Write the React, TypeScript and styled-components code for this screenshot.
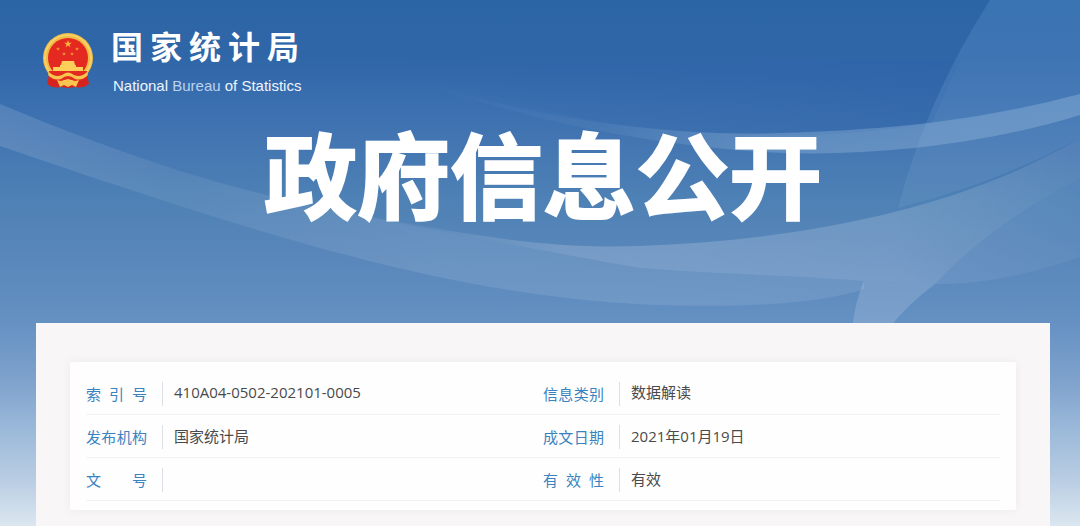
import React from "react";
import styled, { createGlobalStyle } from "styled-components";

const GlobalStyle = createGlobalStyle`
  *, *::before, *::after { box-sizing: border-box; }
  body {
    margin: 0;
    font-family: "Open Sans", "Noto Sans CJK SC", sans-serif;
  }
`;

const Page = styled.div`
  position: relative;
  display: flex;
  flex-direction: column;
  min-height: 100vh;
  background: linear-gradient(
    #2c65a5 0,
    #2f66a8 55px,
    #396eaf 100px,
    #4577b2 150px,
    #4e81b5 200px,
    #5886ba 250px,
    #6490c2 320px,
    #7ea2cc 380px,
    #9bb9d9 430px,
    #b9cde3 480px,
    #dbe7f0 526px
  );
`;

const Waves = styled.svg`
  position: absolute;
  top: 0;
  left: 0;
  width: 100%;
  height: 340px;
`;

const Header = styled.header`
  position: relative;
  padding: 28px 36px 0 42px;
`;

const Brand = styled.a`
  display: inline-flex;
  align-items: flex-start;
  gap: 17px;
  color: #fff;
  text-decoration: none;
`;

const Emblem = styled.svg`
  width: 52px;
  height: 58px;
  margin-top: 4px;
`;

const BrandText = styled.span`
  display: flex;
  flex-direction: column;
  width: 188px;
`;

const BrandName = styled.span`
  font-size: 32px;
  line-height: 38px;
  font-weight: 700;
  text-align: justify;
  text-align-last: justify;
`;

const BrandLatin = styled.span`
  margin-top: 10px;
  padding-left: 2px;
  font-family: "Liberation Sans", Arial, sans-serif;
  font-size: 15px;
  line-height: 20px;
  color: #eef5fd;
  white-space: nowrap;
`;

const LightWord = styled.span`
  color: #bcd2ec;
`;

const Title = styled.h1`
  margin: 10px 0 0;
  font-family: "Noto Sans CJK SC", sans-serif;
  font-size: 93px;
  line-height: 132px;
  font-weight: 700;
  text-align: center;
  color: #fff;
  -webkit-text-stroke: 2px #fff;
`;

const Panel = styled.main`
  position: relative;
  flex: 1;
  margin: 85px 30px 0 36px;
  padding: 39px 34px 16px;
  background: #f9f6f8;
`;

const Card = styled.section`
  padding: 9px 16px;
  background: #fefefe;
  box-shadow: 0 0 10px rgba(40, 40, 60, 0.05);
`;

const InfoTable = styled.table`
  width: 100%;
  table-layout: fixed;
  border-collapse: collapse;

  tr {
    height: 43px;
    border-bottom: 1px solid #f2f2f3;
  }
`;

const LabelCell = styled.th`
  width: 88px;
  padding: 3px 0 0;
  font-size: 15px;
  font-weight: 400;
  color: #3a83bf;
`;

const Label = styled.span`
  display: block;
  width: 77px;
  padding-right: 15px;
  border-right: 1px solid #dcdfe3;
  line-height: 24px;
  text-align: justify;
  text-align-last: justify;
`;

const ValueCell = styled.td`
  padding: 0;
  font-size: 15px;
  line-height: 24px;
  color: #4a4a4a;
`;

type Field = { label: string; value: string };

const rows: Field[][] = [
  [
    { label: "索引号", value: "410A04-0502-202101-0005" },
    { label: "信息类别", value: "数据解读" },
  ],
  [
    { label: "发布机构", value: "国家统计局" },
    { label: "成文日期", value: "2021年01月19日" },
  ],
  [
    { label: "文号", value: "" },
    { label: "有效性", value: "有效" },
  ],
];

const star = "M0-5 1.2-1.6 4.8-1.6 1.9.6 3 4 0 1.9-3 4-1.9.6-4.8-1.6-1.2-1.6Z";

function NationalEmblem() {
  return (
    <Emblem viewBox="0 0 52 58" aria-hidden="true">
      <path d="M8 38 L5 52 Q12 57 18 55 L26 56 L34 55 Q40 57 47 52 L44 38Z" fill="#d5231f" />
      <circle cx="26" cy="26" r="25" fill="#f0ba45" />
      <circle cx="26" cy="26" r="23" fill="none" stroke="#f8d064" strokeWidth="2" />
      <circle cx="26" cy="26" r="20" fill="#e32920" />
      <path d={star} transform="translate(26 12) scale(.8)" fill="#fbb43e" />
      <path d={star} transform="translate(16 17) scale(.4)" fill="#f39a38" />
      <path d={star} transform="translate(35 17) scale(.4)" fill="#f39a38" />
      <path d={star} transform="translate(22 22) scale(.4)" fill="#f39a38" />
      <path d={star} transform="translate(30 22) scale(.4)" fill="#f39a38" />
      <path d="M20 29H32L33 33H19ZM18 33H34V35H41V39H11V35H18Z" fill="#fbcf58" />
      <path d="M7 39H45V45Q40 50 33 49L26 47 19 49Q12 50 7 45Z" fill="#e32920" />
      <path d="M7 40Q13 46 20 43Q26 38 32 43Q39 46 45 40L46 43Q40 49 33 47Q26 41 19 47Q12 49 6 43Z" fill="#f8c64e" />
      <path d="M15 48L22 50 26 47 30 50 37 48 34 55 30 53 26 55 22 53 18 55Z" fill="#f8c64e" />
    </Emblem>
  );
}

function HeaderWaves() {
  return (
    <Waves viewBox="0 0 1080 340" preserveAspectRatio="none" aria-hidden="true">
      <defs>
        <linearGradient id="leftBand" x1="0" x2="1" y1="0" y2="0">
          <stop offset="0" stopColor="#fff" stopOpacity=".13" />
          <stop offset=".2" stopColor="#fff" stopOpacity=".07" />
          <stop offset=".5" stopColor="#fff" stopOpacity=".1" />
          <stop offset="1" stopColor="#fff" stopOpacity=".09" />
        </linearGradient>
        <linearGradient id="topBand" x1="0" x2="1" y1="0" y2="0">
          <stop offset="0" stopColor="#9fc0e0" stopOpacity="0" />
          <stop offset=".3" stopColor="#9fc0e0" stopOpacity=".08" />
          <stop offset=".55" stopColor="#9fc0e0" stopOpacity=".32" />
          <stop offset="1" stopColor="#9fc0e0" stopOpacity=".36" />
        </linearGradient>
        <linearGradient id="mainBand" x1="0" x2="1" y1="0" y2="0">
          <stop offset="0" stopColor="#fff" stopOpacity="0" />
          <stop offset=".3" stopColor="#fff" stopOpacity=".18" />
          <stop offset=".75" stopColor="#fff" stopOpacity=".16" />
          <stop offset="1" stopColor="#fff" stopOpacity=".08" />
        </linearGradient>
        <linearGradient id="sideGlow" x1="0" x2="0" y1="0" y2="1">
          <stop offset="0" stopColor="#5b95cf" stopOpacity=".3" />
          <stop offset="1" stopColor="#8fb4d8" stopOpacity=".14" />
        </linearGradient>
        <linearGradient id="topDark" x1="0" x2="1" y1="0" y2="0">
          <stop offset="0" stopColor="#2d63a8" stopOpacity="0" />
          <stop offset="1" stopColor="#2d63a8" stopOpacity=".5" />
        </linearGradient>
      </defs>
      <path d="M400 60 H960 L932 123 Q790 148 600 122 Q470 95 400 60Z" fill="url(#topDark)" />
      <path d="M990 0 Q926 100 898 208 Q1000 182 1080 138 V0Z" fill="url(#sideGlow)" />
      <path d="M0 104 Q90 142 180 171 Q270 199 350 213 C440 232 560 254 640 268 C700 273 800 276 864 281 V289 C800 311 650 309 560 297 C400 278 240 228 0 146Z" fill="url(#leftBand)" />
      <path d="M400 75 C530 118 660 137 780 133 C900 130 990 118 1080 94 V115 C980 146 860 158 760 152 C610 140 500 112 400 75Z" fill="url(#topBand)" />
      <path d="M350 213 C440 228 530 250 640 246 C800 240 960 210 1080 138 V257 Q1000 285 935 284 L864 281 C800 276 700 273 640 268 C560 254 440 232 350 213Z" fill="url(#mainBand)" />
      <path d="M1080 178 Q990 225 935 284 Q1000 285 1080 257Z" fill="#4f80b8" fillOpacity=".3" />
      <path d="M864 281 L935 284 Q908 304 889 328 H852 Q855 302 864 281Z" fill="#fff" fillOpacity=".15" />
    </Waves>
  );
}

export default function App() {
  return (
    <Page>
      <GlobalStyle />
      <HeaderWaves />
      <Header>
        <Brand href="#">
          <NationalEmblem />
          <BrandText>
            <BrandName lang="zh-CN">国家统计局</BrandName>
            <BrandLatin lang="en">
              National <LightWord>Bureau</LightWord> of Statistics
            </BrandLatin>
          </BrandText>
        </Brand>
        <Title lang="zh-CN">政府信息公开</Title>
      </Header>
      <Panel lang="zh-CN">
        <Card>
          <InfoTable>
            <tbody>
              {rows.map((row) => (
                <tr key={row[0].label}>
                  {row.map((field) => (
                    <React.Fragment key={field.label}>
                      <LabelCell scope="row">
                        <Label>{field.label}</Label>
                      </LabelCell>
                      <ValueCell>{field.value}</ValueCell>
                    </React.Fragment>
                  ))}
                </tr>
              ))}
            </tbody>
          </InfoTable>
        </Card>
      </Panel>
    </Page>
  );
}
